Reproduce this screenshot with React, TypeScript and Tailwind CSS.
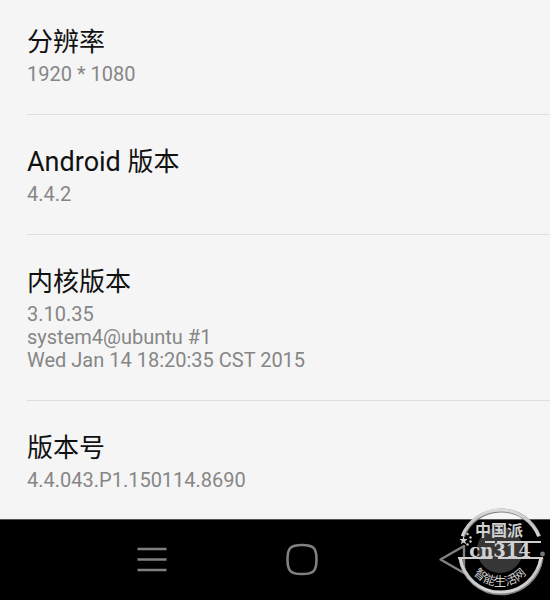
import React from 'react';

const items = [
  { title: '分辨率', lines: ['1920 * 1080'] },
  { latin: 'Android ', title: '版本', lines: ['4.4.2'] },
  { title: '内核版本', lines: ['3.10.35', 'system4@ubuntu #1', 'Wed Jan 14 18:20:35 CST 2015'] },
  { title: '版本号', lines: ['4.4.043.P1.150114.8690'] },
];

const InfoList = () => (
  <main className="flex-1 pl-[27px] -mt-[5px]">
    {items.map(item => (
      <section key={item.title} className="pt-[26px] pb-[28px] border-b border-[#dedede] last:pb-[27px] last:border-b-0">
        <h2 className="text-[26px] leading-[42px] text-[#111111]">
          {item.latin && <span className="text-[27px]">{item.latin}</span>}
          {item.title}
        </h2>
        {item.lines.map(line => (
          <p key={line} className="text-[20px] leading-[23px] text-[#868686]">{line}</p>
        ))}
      </section>
    ))}
  </main>
);

const NavBar = () => (
  <nav className="h-[81px] shrink-0 bg-black border-t border-[#555555] pl-[14%] pr-[4%] grid grid-cols-3 place-items-center">
    <button type="button" aria-label="Menu">
      <svg width="34" height="34" viewBox="0 0 34 34" fill="none" stroke="#808080" strokeWidth="2.6">
        <path d="M2.5 6h29M2.5 16.5h29M2.5 27h29" />
      </svg>
    </button>
    <button type="button" aria-label="Home">
      <svg width="34" height="34" viewBox="0 0 34 34" fill="none" stroke="#808080" strokeWidth="2.6">
        <path d="M17 2C28.5 2 31.5 5 31.5 16.5S28.5 31 17 31 2.5 28 2.5 16.5 5.5 2 17 2Z" />
      </svg>
    </button>
    <button type="button" aria-label="Back">
      <svg width="34" height="34" viewBox="0 0 34 34" fill="none" stroke="#808080" strokeWidth="2.4" strokeLinejoin="round">
        <path d="M4.5 16.5 28 3v27Z" />
      </svg>
    </button>
  </nav>
);

const SiteBadge = () => (
  <svg className="absolute right-0 bottom-0 pointer-events-none" width="100" height="100" viewBox="0 0 100 100">
    <defs>
      <linearGradient id="metal" x1="0" y1="0" x2="0" y2="1">
        <stop offset="0" stopColor="#dcdcdc" />
        <stop offset="0.5" stopColor="#c4c4c4" />
        <stop offset="1" stopColor="#d6d6d6" />
      </linearGradient>
      <path id="lower-arc" d="M16 52A34 34 0 0 0 84 52" />
    </defs>
    <circle cx="50" cy="50" r="23" fill="#363636" />

    {/* ring, broken on both sides by the name */}
    <g fill="none" stroke="#858585" strokeWidth="4">
      <path d="M12.8 36.5A41 41 0 0 1 89.2 36.5" />
      <path d="M10.4 58A41 41 0 0 0 91.6 58" />
    </g>
    <g fill="none" stroke="url(#metal)" strokeWidth="3">
      <path d="M12.3 36A41 41 0 0 1 88.7 36" />
      <path d="M10 57.5A41 41 0 0 0 91 57.5" />
    </g>
    <g fill="#d0d0d0">
      <path d="M35 41h10v2H35zM47 41h44v2H47zM8 57h34.5v2H8zM48 57h45v2H48z" />
      <path d="m13.5 36 1 3 3.2.1-2.500 2 .9 3.1-2.600-1.800-2.600 1.800.9-3.100-2.500-2 3.200-.1z" />
      <circle cx="17.5" cy="34" r="1.2" />
      <circle cx="20.5" cy="37.5" r="1.2" />
      <circle cx="20.5" cy="41.5" r="1.2" />
      <circle cx="17.5" cy="44.5" r="1.2" />
      <circle cx="92.5" cy="54" r="2.4" fill="#777777" />
    </g>

    <g fill="#d0d0d0" textAnchor="middle">
      <text x="49" y="36" className="text-[16px] font-bold">中国派</text>
      <text x="50" y="57" className="text-[18px] font-bold font-['DejaVu_Serif',serif]">cn314</text>
      <text className="text-[12px]">
        <textPath href="#lower-arc" startOffset="50%">智能生活网</textPath>
      </text>
    </g>
  </svg>
);

export default function App() {
  return (
    <div className="relative min-h-screen flex flex-col overflow-hidden bg-[#f5f5f5] font-[Roboto,'Noto_Sans_CJK_SC',sans-serif]">
      <InfoList />
      <NavBar />
      <SiteBadge />
    </div>
  );
}
